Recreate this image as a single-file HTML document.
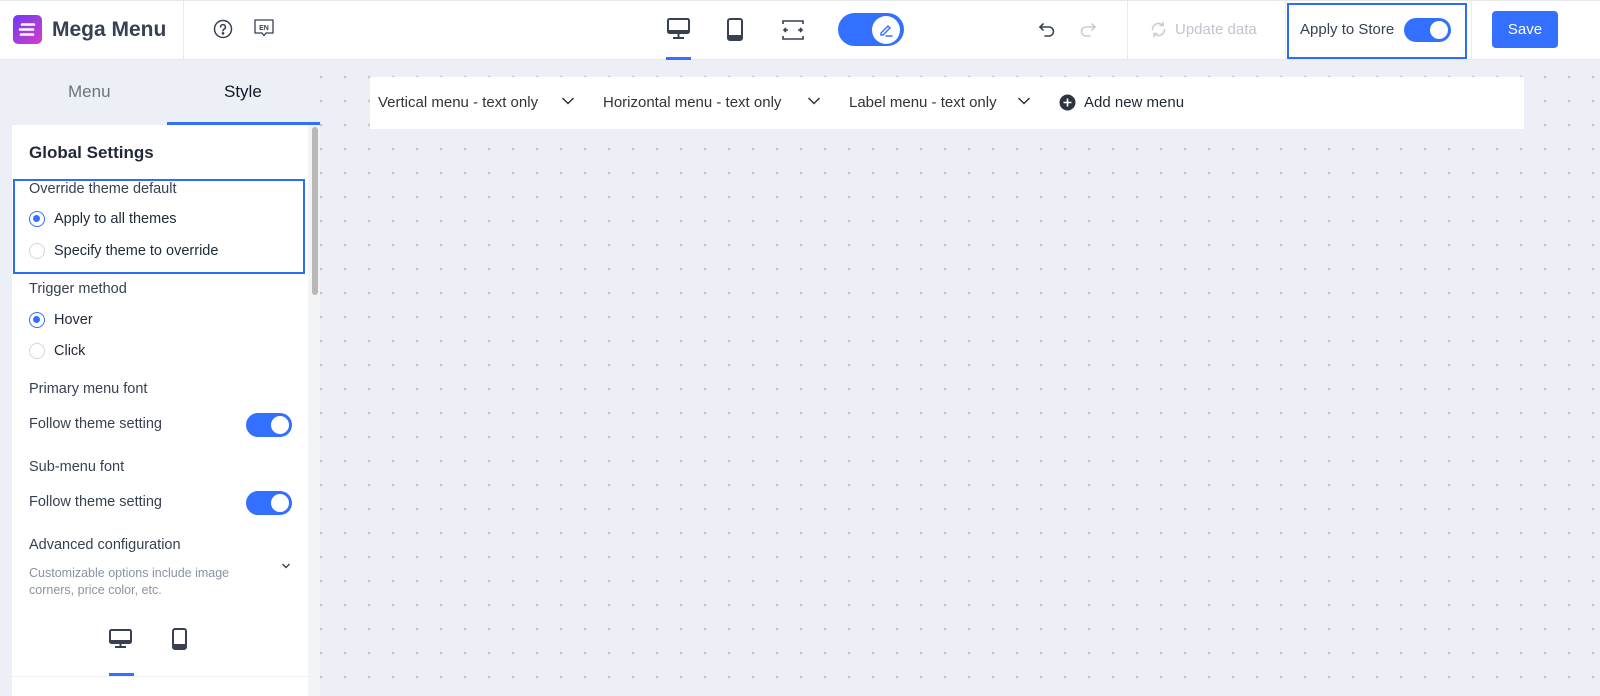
<!DOCTYPE html>
<html><head><meta charset="utf-8"><style>
*{box-sizing:border-box;margin:0;padding:0}
body{width:1600px;height:696px;overflow:hidden;font-family:"Liberation Sans",sans-serif;background:#eceff5;position:relative;color:#1f2937}
.a{position:absolute}
.top{left:0;top:0;width:1600px;height:60px;background:#fff;border-top:1px solid #e5e7eb;border-bottom:1px solid #e5e7eb}
.vl{position:absolute;top:0;width:1px;height:59px;background:#e8eaee}
.t{position:absolute;white-space:nowrap}
.canvas{left:320px;top:60px;width:1280px;height:636px;background-color:#eceff5;background-image:radial-gradient(circle,#c3c8d2 1.1px,transparent 1.6px);background-size:24px 24px;background-position:13px 5px}
.radio{position:absolute;width:16px;height:16px;border-radius:50%;border:1px solid #d1d5db;background:#fff}
.radio.on{border:1.5px solid #3370ff}
.radio.on::after{content:"";position:absolute;left:3px;top:3px;width:7px;height:7px;border-radius:50%;background:#3370ff}
.tog{position:absolute;width:46px;height:24px;border-radius:12px;background:#3370ff}
.tog::after{content:"";position:absolute;right:3px;top:3px;width:18px;height:18px;border-radius:50%;background:#fff}
.lbl{font-size:15px;color:#374151}
</style></head><body>
<div class="a top">
  <div class="a" style="left:13px;top:14px;width:29px;height:29px;border-radius:5px;background:linear-gradient(135deg,#6d3bf5,#d63cc8)"></div>
  <svg class="a" style="left:13px;top:14px" width="29" height="29" viewBox="0 0 29 29"><g stroke="#fff" stroke-width="2.6" stroke-linecap="round"><path d="M9 9.5h12M7 14.5h13M8 19.5h12"/></g></svg>
  <div class="t" style="left:52px;top:17px;font-size:21px;font-weight:bold;color:#374151">Mega Menu</div>
  <div class="vl" style="left:183px"></div>
  <svg class="a" style="left:213px;top:18px" width="20" height="20" viewBox="0 0 20 20" fill="none" stroke="#374151" stroke-width="1.5"><circle cx="10" cy="10" r="8.5"/><path d="M7.6 8a2.4 2.4 0 1 1 3.4 2.2c-.7.4-1 .8-1 1.6" stroke-linecap="round"/><circle cx="10" cy="14.4" r=".6" fill="#374151"/></svg>
  <svg class="a" style="left:253px;top:17px" width="22" height="22" viewBox="0 0 22 22" fill="none" stroke="#374151" stroke-width="1.3"><path d="M2 2h18v13h-7l-2 2.5-2-2.5H2z"/><text x="11" y="12" font-size="7" font-family="Liberation Sans" text-anchor="middle" fill="#374151" stroke="none" font-weight="bold">EN</text></svg>
  <svg class="a" style="left:667px;top:17px" width="23" height="22" viewBox="0 0 23 22"><rect x="1" y="1" width="21" height="14" rx="1.5" fill="none" stroke="#374151" stroke-width="2"/><rect x="1" y="12" width="21" height="3" fill="#374151"/><path d="M11.5 15v4M6 20h11" stroke="#374151" stroke-width="2"/></svg>
  <div class="a" style="left:666px;top:56px;width:25px;height:3px;background:#3370ff"></div>
  <svg class="a" style="left:727px;top:17px" width="16" height="23" viewBox="0 0 16 23"><rect x="1" y="1" width="14" height="21" rx="2" fill="none" stroke="#374151" stroke-width="2"/><rect x="1" y="17" width="14" height="5" fill="#374151"/></svg>
  <svg class="a" style="left:782px;top:18px" width="22" height="22" viewBox="0 0 22 22" fill="none" stroke="#374151" stroke-width="1.6"><path d="M1 5V2h20v3M1 17v3h20v-3"/><path d="M2 11h4M4 9l-2 2 2 2M20 11h-4M18 9l2 2-2 2"/></svg>
  <div class="a" style="left:838px;top:12px;width:66px;height:33px;border-radius:17px;background:#3370ff"></div>
  <div class="a" style="left:872px;top:15px;width:28px;height:28px;border-radius:50%;background:#fff"></div>
  <svg class="a" style="left:878px;top:21px" width="16" height="16" viewBox="0 0 16 16" fill="none" stroke="#3370ff" stroke-width="1.4"><path d="M3 11l7-7 2 2-7 7H3z"/><path d="M8 14h6" stroke-linecap="round"/></svg>
  <svg class="a" style="left:1037px;top:19px" width="20" height="20" viewBox="0 0 20 20" fill="none" stroke="#374151" stroke-width="1.6" stroke-linecap="round"><path d="M6 4L3 7l3 3"/><path d="M3 7h9a4.5 4.5 0 0 1 0 9H8"/></svg>
  <svg class="a" style="left:1078px;top:19px" width="20" height="20" viewBox="0 0 20 20" fill="none" stroke="#c9cdd6" stroke-width="1.6" stroke-linecap="round"><path d="M14 4l3 3-3 3"/><path d="M17 7H8a4.5 4.5 0 0 0 0 9h4"/></svg>
  <div class="vl" style="left:1127px"></div>
  <svg class="a" style="left:1150px;top:20px" width="17" height="17" viewBox="0 0 17 17" fill="none" stroke="#c9cdd6" stroke-width="1.6" stroke-linecap="round"><path d="M14.5 8.5A6 6 0 0 1 4 12.5M2.5 8.5A6 6 0 0 1 13 4.5"/><path d="M13 1.5v3h-3M4 15.5v-3h3"/></svg>
  <div class="t" style="left:1175px;top:20px;font-size:15px;color:#c0c5ce">Update data</div>
  <div class="vl" style="left:1285px"></div>
  <div class="a" style="left:1287px;top:2px;width:180px;height:56px;border:2.5px solid #2e6bf6;background:#fff"></div>
  <div class="t" style="left:1300px;top:20px;font-size:15px;color:#374151">Apply to Store</div>
  <div class="tog" style="left:1404px;top:17px;width:47px;height:24px"></div>
  <div class="vl" style="left:1471px"></div>
  <div class="a" style="left:1492px;top:10px;width:66px;height:37px;border-radius:4px;background:#3370ff;color:#fff;font-size:15px;text-align:center;line-height:37px">Save</div>
</div>

<div class="a" style="left:0;top:60px;width:320px;height:636px;background:#eceff5"></div>
<div class="t" style="left:68px;top:82px;font-size:17px;color:#6b7280">Menu</div>
<div class="t" style="left:224px;top:82px;font-size:17px;color:#111827">Style</div>
<div class="a" style="left:167px;top:122px;width:153px;height:3px;background:#3370ff"></div>
<div class="a" style="left:12px;top:125px;width:296px;height:571px;background:#fff"></div>
<div class="a" style="left:308px;top:125px;width:12px;height:571px;background:#f3f4f6"></div>
<div class="a" style="left:312px;top:127px;width:6px;height:168px;border-radius:3px;background:#b8b8b8"></div>

<div class="t" style="left:29px;top:143px;font-size:17px;font-weight:bold;color:#1f2937">Global Settings</div>
<div class="a" style="left:13px;top:179px;width:292px;height:95px;border:2.5px solid #2e6bf6"></div>
<div class="t lbl" style="left:29px;top:181px;font-size:14.5px">Override theme default</div>
<div class="radio on" style="left:29px;top:211px"></div><div class="t lbl" style="left:54px;top:211px;font-size:14.5px;color:#1f2937">Apply to all themes</div>
<div class="radio" style="left:29px;top:243px"></div><div class="t lbl" style="left:54px;top:243px;font-size:14.5px;color:#1f2937">Specify theme to override</div>
<div class="t lbl" style="left:29px;top:281px;font-size:14.5px">Trigger method</div>
<div class="radio on" style="left:29px;top:312px"></div><div class="t lbl" style="left:54px;top:312px;font-size:14.5px;color:#1f2937">Hover</div>
<div class="radio" style="left:29px;top:343px"></div><div class="t lbl" style="left:54px;top:343px;font-size:14.5px;color:#1f2937">Click</div>
<div class="t lbl" style="left:29px;top:381px;font-size:14.5px">Primary menu font</div>
<div class="t lbl" style="left:29px;top:416px;font-size:14.5px">Follow theme setting</div>
<div class="tog" style="left:246px;top:413px"></div>
<div class="t lbl" style="left:29px;top:459px;font-size:14.5px">Sub-menu font</div>
<div class="t lbl" style="left:29px;top:494px;font-size:14.5px">Follow theme setting</div>
<div class="tog" style="left:246px;top:491px"></div>
<div class="t lbl" style="left:29px;top:537px;font-size:14.5px">Advanced configuration</div>
<div class="t" style="left:29px;top:565px;font-size:12.5px;color:#8a93a3;line-height:17px">Customizable options include image<br>corners, price color, etc.</div>
<svg class="a" style="left:281px;top:562px" width="10" height="8" viewBox="0 0 10 8" fill="none" stroke="#374151" stroke-width="1.4"><path d="M1.5 2l3.5 3.5L8.5 2"/></svg>
<svg class="a" style="left:109px;top:629px" width="23" height="20" viewBox="0 0 23 20"><rect x="1" y="1" width="21" height="13" rx="1.5" fill="none" stroke="#374151" stroke-width="2"/><rect x="1" y="11" width="21" height="3" fill="#374151"/><path d="M11.5 14v3M6 18h11" stroke="#374151" stroke-width="2"/></svg>
<div class="a" style="left:109px;top:673px;width:25px;height:3px;background:#3370ff"></div>
<svg class="a" style="left:172px;top:628px" width="15" height="22" viewBox="0 0 15 22"><rect x="1" y="1" width="13" height="20" rx="2" fill="none" stroke="#374151" stroke-width="2"/><rect x="1" y="16" width="13" height="5" fill="#374151"/></svg>
<div class="a" style="left:12px;top:676px;width:296px;height:1px;background:#eef0f3"></div>

<div class="a canvas"></div>
<div class="a" style="left:370px;top:77px;width:1154px;height:52px;background:#fff"></div>
<div class="t" style="left:378px;top:94px;font-size:15px;color:#333">Vertical menu - text only</div>
<svg class="a" style="left:561px;top:96px" width="14" height="10" viewBox="0 0 14 10" fill="none" stroke="#333" stroke-width="1.5"><path d="M1.5 2l5.5 5.5L12.5 2"/></svg>
<div class="t" style="left:603px;top:94px;font-size:15px;color:#333">Horizontal menu - text only</div>
<svg class="a" style="left:807px;top:96px" width="14" height="10" viewBox="0 0 14 10" fill="none" stroke="#333" stroke-width="1.5"><path d="M1.5 2l5.5 5.5L12.5 2"/></svg>
<div class="t" style="left:849px;top:94px;font-size:15px;color:#333">Label menu - text only</div>
<svg class="a" style="left:1017px;top:96px" width="14" height="10" viewBox="0 0 14 10" fill="none" stroke="#333" stroke-width="1.5"><path d="M1.5 2l5.5 5.5L12.5 2"/></svg>
<svg class="a" style="left:1059px;top:94px" width="17" height="17" viewBox="0 0 17 17"><circle cx="8.5" cy="8.5" r="8" fill="#2d3440"/><path d="M8.5 4.5v8M4.5 8.5h8" stroke="#fff" stroke-width="1.6"/></svg>
<div class="t" style="left:1084px;top:94px;font-size:15px;color:#1f2937">Add new menu</div>
</body></html>
